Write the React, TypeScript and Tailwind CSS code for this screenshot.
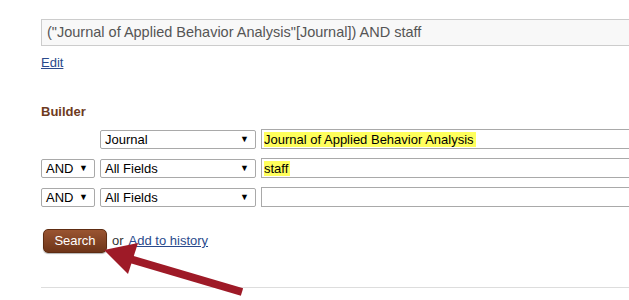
import React from 'react';

function FakeSelect({ value, width }: { value: string; width: string }) {
  return (
    <div
      className={`${width} shrink-0 h-[19px] border border-[#a9a9a9] bg-white flex items-center justify-between pl-[4px] pr-[6px] text-[13px] text-black leading-none rounded-[2px]`}
    >
      <span>{value}</span>
      <span className="text-[9px] text-black">▼</span>
    </div>
  );
}

function TermInput({ value }: { value?: string }) {
  return (
    <div className="w-[420px] shrink-0 h-[20px] border border-[#a9a9a9] bg-white flex items-center pl-[2px] text-[13px] text-black leading-none">
      {value && <span className="bg-[#ffff5c] pr-[2px] py-[1px]">{value}</span>}
    </div>
  );
}

export default function App() {
  return (
    <div
      className="relative w-[629px] h-[300px] overflow-hidden bg-white"
      style={{ fontFamily: '"Liberation Sans", Arial, sans-serif' }}
    >
      <div className="pl-[41px] pt-[19px]">
        <div className="w-[620px] h-[27px] border border-[#cccccc] bg-[#f8f8f8] flex items-center pl-[5px] text-[14.5px] text-[#555555]">
          ("Journal of Applied Behavior Analysis"[Journal]) AND staff
        </div>
        <a href="#" className="block mt-[7px] text-[13px] text-[#2a4a8c] underline w-fit">
          Edit
        </a>

        <h3 className="mt-[29px] text-[13px] font-bold text-[#6e3b1e]">Builder</h3>

        <div className="mt-[8px] flex flex-col gap-[9px]">
          <div className="flex items-center gap-[5px]">
            <div className="w-[54px] shrink-0" />
            <FakeSelect value="Journal" width="w-[156px]" />
            <TermInput value="Journal of Applied Behavior Analysis" />
          </div>
          <div className="flex items-center gap-[5px]">
            <FakeSelect value="AND" width="w-[54px]" />
            <FakeSelect value="All Fields" width="w-[156px]" />
            <TermInput value="staff" />
          </div>
          <div className="flex items-center gap-[5px]">
            <FakeSelect value="AND" width="w-[54px]" />
            <FakeSelect value="All Fields" width="w-[156px]" />
            <TermInput />
          </div>
        </div>

        <div className="mt-[22px] flex items-center gap-[5px] text-[13px]">
          <button className="ml-[2px] w-[64px] h-[24px] rounded-[5px] border border-[#5e2c12] bg-gradient-to-b from-[#9a5431] to-[#6e3519] text-white text-[13px] shadow-[0_1px_1px_rgba(0,0,0,0.3)]">
            Search
          </button>
          <span className="text-[#333333]">or</span>
          <a href="#" className="text-[#2a4a8c] underline">
            Add to history
          </a>
        </div>

        <div className="mt-[34px] w-[600px] border-t border-[#dddddd]" />
      </div>

      <svg className="absolute left-0 top-0 pointer-events-none" width="629" height="300">
        <line x1="242" y1="292" x2="130" y2="259" stroke="#9e1a27" strokeWidth="8" />
        <polygon points="104,250 138,243 128,274" fill="#9e1a27" />
      </svg>
    </div>
  );
}
